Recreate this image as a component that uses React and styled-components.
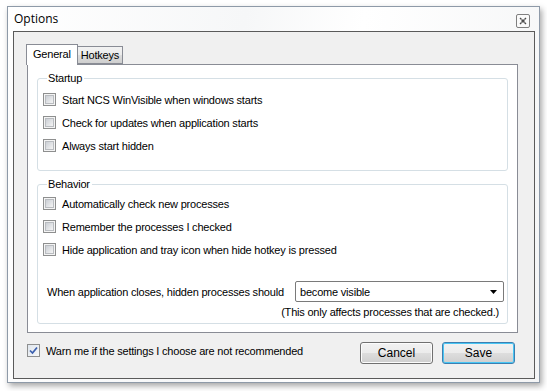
import React from "react";
import styled, { createGlobalStyle } from "styled-components";

const GlobalStyle = createGlobalStyle`
  html, body { margin: 0; padding: 0; background: #ffffff; }
  body {
    font-family: "Liberation Sans", Arial, sans-serif;
    font-size: 11px;
    letter-spacing: -0.2px;
    color: #000;
  }
`;

const Page = styled.div`
  width: 547px;
  height: 391px;
  padding: 6px 0 0 7px;
  box-sizing: border-box;
`;

const Window = styled.div`
  width: 533px;
  height: 377px;
  box-sizing: border-box;
  border: 1px solid #8e9aa8;
  background: linear-gradient(100deg, #ffffff 0%, #f6f7f8 40%, #ffffff 60%, #f4f5f6 100%);
  box-shadow: 2px 3px 6px rgba(0, 0, 0, 0.35);
  display: flex;
  flex-direction: column;
  padding: 0 4px 3px 5px;
`;

const TitleBar = styled.div`
  height: 24px;
  display: flex;
  align-items: center;
  justify-content: space-between;
  padding: 0 5px 0 1px;
`;

const Title = styled.div`
  font-family: "Open Sans", "Noto Sans", sans-serif;
  font-size: 12px;
  letter-spacing: 0;
  color: #000;
  margin-top: -1px;
`;

const CloseBox = styled.div`
  width: 12px;
  height: 12px;
  border: 1px solid #7f7f7f;
  border-radius: 2px;
  background: #fafafa;
  display: flex;
  align-items: center;
  justify-content: center;
  margin-top: 4px;
`;

const Client = styled.div`
  flex: 1;
  border: 1px solid #5a5a5a;
  background: #f0f0f0;
  padding: 12px 16px 15px 13px;
  display: flex;
  flex-direction: column;
`;

const Tabs = styled.div`
  display: flex;
  align-items: flex-end;
  height: 20px;
  position: relative;
  z-index: 1;
`;

const Tab = styled.div`
  box-sizing: border-box;
  border: 1px solid #898c95;
  border-bottom: ${p => (p.$active ? "none" : "1px solid #898c95")};
  background: ${p =>
    p.$active ? "#ffffff" : "linear-gradient(#f2f2f2, #ebebeb 50%, #dddddd 51%, #cfcfcf)"};
  height: ${p => (p.$active ? "21px" : "18px")};
  margin-bottom: ${p => (p.$active ? "-1px" : "0")};
  margin-left: -1px;
  padding: ${p => (p.$active ? "3px 6px 0 6px" : "2px 3px 0 3px")};
  line-height: 13px;
`;

const Panel = styled.div`
  height: 269px;
  box-sizing: border-box;
  border: 1px solid #898c95;
  background: #ffffff;
  padding: 7px 9px 0 9px;
  display: flex;
  flex-direction: column;
  gap: 7px;
`;

const Group = styled.fieldset`
  margin: 0;
  border: 1px solid #d5dfe5;
  border-radius: 3px;
  padding: ${p => p.$pad};
  min-width: 0;
`;

const Legend = styled.legend`
  padding: 0 2px 0 1px;
  margin-left: 4px;
  line-height: 13px;
  color: #000;
`;

const Row = styled.label`
  display: flex;
  align-items: center;
  height: 23px;
  gap: 6px;
  white-space: nowrap;
`;

const Box = styled.span`
  width: 13px;
  height: 13px;
  box-sizing: border-box;
  border: 1px solid #8e8f8f;
  background: #f4f4f4;
  display: flex;
  align-items: center;
  justify-content: center;
  flex: none;
  &::before {
    content: "";
    width: 9px;
    height: 9px;
    box-sizing: border-box;
    border: 1px solid #b9bcc0;
    background: linear-gradient(135deg, #cbcfd5, #f4f4f4);
  }
`;

const CheckedBox = styled.span`
  width: 13px;
  height: 13px;
  box-sizing: border-box;
  border: 1px solid #8e8f8f;
  background: linear-gradient(135deg, #dfe6ee, #f7f7f7);
  display: flex;
  align-items: center;
  justify-content: center;
  flex: none;
`;

const Check = () => (
  <CheckedBox>
    <svg width="9" height="9" viewBox="0 0 9 9">
      <path d="M1 4.5 L3.5 7 L8 1.5" fill="none" stroke="#3b5fae" strokeWidth="1.7" />
    </svg>
  </CheckedBox>
);

const SelectRow = styled.div`
  display: flex;
  align-items: center;
  justify-content: space-between;
  padding: 0 0 0 4px;
  margin-top: 20px;
  white-space: nowrap;
`;

const Select = styled.div`
  width: 209px;
  height: 21px;
  box-sizing: border-box;
  border: 1px solid #7a7a7a;
  border-radius: 2px;
  background: #ffffff;
  display: flex;
  align-items: center;
  justify-content: space-between;
  padding: 0 6px 0 4px;
`;

const Note = styled.div`
  text-align: right;
  padding-right: 5px;
  margin-top: 4px;
  line-height: 13px;
  white-space: nowrap;
`;

const Footer = styled.div`
  display: flex;
  align-items: center;
  margin-top: 9px;
  height: 21px;
  padding-right: 3px;
`;

const FooterCheck = styled.label`
  display: flex;
  align-items: center;
  gap: 6px;
  flex: 1;
  margin-top: -4px;
  white-space: nowrap;
`;

const Button = styled.button`
  width: 73px;
  height: 22px;
  margin-left: 9px;
  box-sizing: border-box;
  font-family: "Liberation Sans", Arial, sans-serif;
  font-size: 12px;
  color: #000;
  border: 1px solid ${p => (p.$default ? "#3c7fb1" : "#707070")};
  border-radius: 3px;
  background: linear-gradient(#f2f2f2, #ebebeb 50%, #dddddd 51%, #cfcfcf);
  box-shadow: ${p => (p.$default ? "inset 0 0 0 1px #48c6f4" : "inset 0 0 0 1px #fcfcfc")};
  padding: 0;
`;

const startup = [
  "Start NCS WinVisible when windows starts",
  "Check for updates when application starts",
  "Always start hidden",
];

const behavior = [
  "Automatically check new processes",
  "Remember the processes I checked",
  "Hide application and tray icon when hide hotkey is pressed",
];

export default function App() {
  return (
    <Page>
      <GlobalStyle />
      <Window>
        <TitleBar>
          <Title>Options</Title>
          <CloseBox>
            <svg width="8" height="8" viewBox="0 0 8 8">
              <path d="M1 1 L7 7 M7 1 L1 7" stroke="#4a4a4a" strokeWidth="1.3" />
              <rect x="2.5" y="2.5" width="3" height="3" fill="none" stroke="#9a9a9a" strokeWidth="0.8" />
            </svg>
          </CloseBox>
        </TitleBar>
        <Client>
          <Tabs>
            <Tab $active>General</Tab>
            <Tab>Hotkeys</Tab>
          </Tabs>
          <Panel>
            <Group $pad="3px 6px 13px 5px">
              <Legend>Startup</Legend>
              {startup.map(t => (
                <Row key={t}>
                  <Box />
                  {t}
                </Row>
              ))}
            </Group>
            <Group $pad="1px 3px 4px 5px">
              <Legend>Behavior</Legend>
              {behavior.map(t => (
                <Row key={t}>
                  <Box />
                  {t}
                </Row>
              ))}
              <SelectRow>
                <span>When application closes, hidden processes should</span>
                <Select>
                  <span>become visible</span>
                  <svg width="7" height="4" viewBox="0 0 7 4">
                    <path d="M0 0 H7 L3.5 4 Z" fill="#000" />
                  </svg>
                </Select>
              </SelectRow>
              <Note>(This only affects processes that are checked.)</Note>
            </Group>
          </Panel>
          <Footer>
            <FooterCheck>
              <Check />
              Warn me if the settings I choose are not recommended
            </FooterCheck>
            <Button>Cancel</Button>
            <Button $default>Save</Button>
          </Footer>
        </Client>
      </Window>
    </Page>
  );
}
